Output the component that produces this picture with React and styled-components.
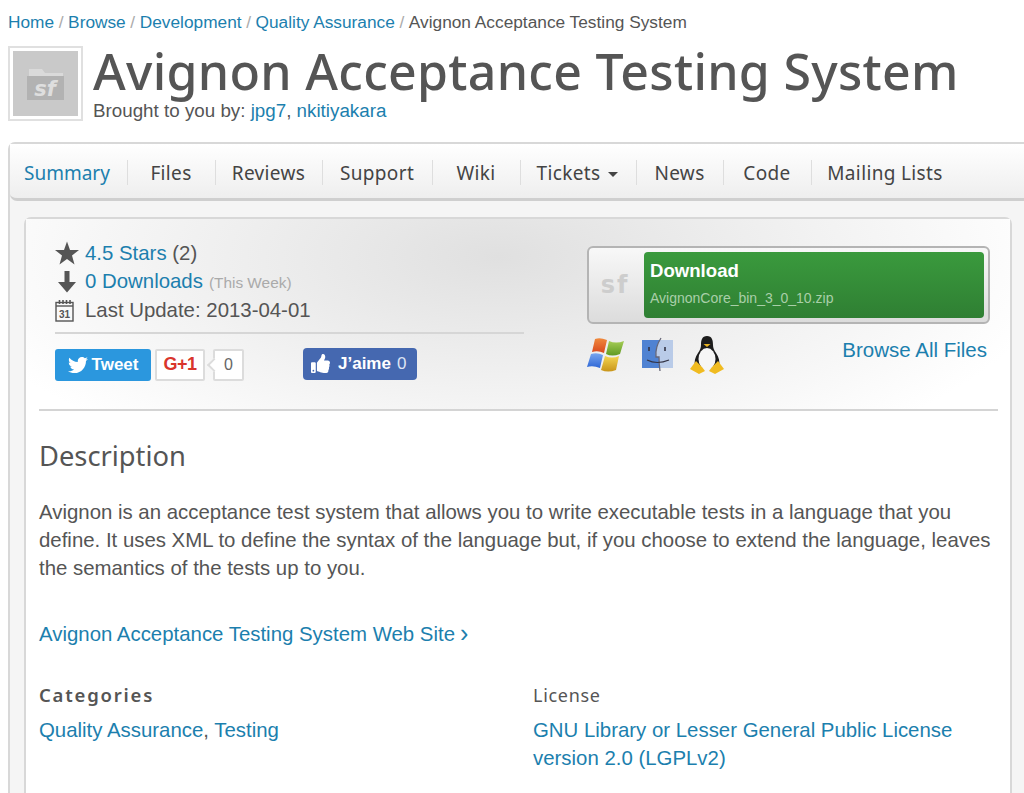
import React from 'react';
import styled, { createGlobalStyle } from 'styled-components';
import { FaTwitter, FaThumbsUp } from 'react-icons/fa';

const Global = createGlobalStyle`
  html, body { margin: 0; padding: 0; height: 793px; overflow: hidden; background: #fff; }
  body { font-family: "Liberation Sans", Arial, sans-serif; color: #555; }
  a { color: #1c7fae; text-decoration: none; }
`;

const heading = `"Noto Sans", "Open Sans", sans-serif`;

const Page = styled.div`
  padding-left: 8px;
  width: 1016px;
  height: 793px;
  overflow: hidden;
`;

const Crumbs = styled.div`
  height: 46px;
  box-sizing: border-box;
  padding-top: 13px;
  font-size: 17.3px;
  line-height: 19px;
  white-space: nowrap;
  color: #555;
  span { color: #aaa; margin: 0 4.6px; }
`;

const Head = styled.div`
  display: flex;
  height: 96px;
`;

const Logo = styled.div`
  width: 75px;
  height: 75px;
  box-sizing: border-box;
  border: 2px solid #e0e0e0;
  padding: 3px;
  margin-right: 10px;
  background: #fff;
  div {
    width: 100%;
    height: 100%;
    background: #c9c9c9;
    display: flex;
    align-items: center;
    justify-content: center;
  }
`;

const TitleBlock = styled.div`
  white-space: nowrap;
`;

const Title = styled.h1`
  margin: -1px 0 0;
  font-family: ${heading};
  font-weight: 500;
  font-size: 50px;
  line-height: 52px;
  letter-spacing: 0.3px;
  color: #555;
`;

const By = styled.div`
  margin-top: 3px;
  font-size: 18.8px;
  line-height: 22px;
  color: #555;
`;

const Frame = styled.div`
  box-sizing: border-box;
  height: 660px;
  width: 1040px;
  background: #f5f5f5;
  border-left: 2px solid #d8d8d8;
  border-top: 2px solid #d8d8d8;
  border-radius: 7px 0 0 0;
`;

const Nav = styled.nav`
  height: 57px;
  box-sizing: border-box;
  display: flex;
  align-items: center;
  padding-top: 3px;
  background: linear-gradient(#fff, #eeeeee);
  border-bottom: 3px solid #cfcfcf;
  border-radius: 0 0 0 7px;
`;

const Tab = styled.a`
  display: flex;
  align-items: center;
  justify-content: ${p => (p.$first ? 'flex-start' : 'center')};
  box-sizing: border-box;
  flex: none;
  width: ${p => p.$w}px;
  height: 25px;
  padding-left: ${p => (p.$first ? 14 : 0)}px;
  padding-right: ${p => (p.$first ? 0 : 1)}px;
  border-right: ${p => (p.$last ? 'none' : '1px solid #dedede')};
  font-family: ${heading};
  font-size: 19px;
  letter-spacing: ${p => (p.$first ? 0 : 0.35)}px;
  white-space: nowrap;
  color: ${p => (p.$first ? '#1c7fae' : '#444')};
`;

const Caret = styled.i`
  width: 0;
  height: 0;
  margin-left: 8px;
  margin-right: 1px;
  margin-top: 3px;
  border-left: 5.5px solid transparent;
  border-right: 5.5px solid transparent;
  border-top: 5px solid #444;
`;

const Panel = styled.div`
  box-sizing: border-box;
  width: 988px;
  margin: 16px 0 0 14px;
  height: 600px;
  background: #fff;
  border: 2px solid #d8d8d8;
  border-radius: 7px 7px 0 0;
`;

const Summary = styled.div`
  height: 190px;
  box-sizing: border-box;
  display: flex;
  padding-left: 29px;
  background: radial-gradient(ellipse 560px 230px at 48% 20%, #e0e0e0, #ffffff);
`;

const Rule = styled.div`
  height: 2px;
  background: #d4d4d4;
  margin: 0 12px 0 13px;
`;

const Stats = styled.div`
  width: 469px;
  padding-top: 20px;
`;

const Stat = styled.div`
  display: flex;
  align-items: center;
  height: 28.5px;
  font-size: 20.4px;
  color: #555;
  white-space: nowrap;
  svg { width: 24px; flex: none; margin-right: 6px; }
  small { font-size: 15.4px; color: #aaa; margin-left: 6px; margin-top: 2px; }
`;

const Social = styled.div`
  border-top: 2px solid #d6d6d6;
  margin-top: 7px;
  padding-top: 15px;
  display: flex;
  align-items: flex-start;
`;

const Tweet = styled.div`
  display: flex;
  align-items: center;
  justify-content: center;
  gap: 4px;
  width: 96px;
  height: 32px;
  background: #2b97de;
  border-radius: 3px;
  color: #fff;
  font-weight: 700;
  font-size: 17px;
`;

const Plus = styled.div`
  display: flex;
  align-items: center;
  justify-content: center;
  width: 50px;
  height: 32px;
  box-sizing: border-box;
  margin-left: 4px;
  background: #fff;
  border: 2px solid #dcdcdc;
  border-radius: 2px;
  color: #d9352c;
  font-weight: 700;
  font-size: 18px;
  letter-spacing: -0.5px;
`;

const Count = styled.div`
  position: relative;
  width: 31px;
  height: 32px;
  box-sizing: border-box;
  margin-left: 8px;
  background: #fff;
  border: 2px solid #dcdcdc;
  border-radius: 2px;
  display: flex;
  align-items: center;
  justify-content: center;
  font-size: 16px;
  color: #666;
  &::before {
    content: '';
    position: absolute;
    left: -6px;
    top: 9px;
    width: 8px;
    height: 8px;
    background: #fff;
    border-left: 2px solid #dcdcdc;
    border-bottom: 2px solid #dcdcdc;
    transform: rotate(45deg);
  }
`;

const Like = styled.div`
  display: flex;
  align-items: center;
  gap: 8px;
  box-sizing: border-box;
  padding-left: 8px;
  width: 114px;
  height: 32px;
  margin: -1px 0 0 59px;
  background: #4568b0;
  border-radius: 4px;
  color: #fff;
  font-weight: 700;
  font-size: 17px;
  span { font-weight: 400; margin-left: -2px; color: #dde4f3; }
`;

const Side = styled.div`
  width: 403px;
  margin-left: 63px;
  padding-top: 27px;
`;

const DownloadBox = styled.div`
  display: flex;
  box-sizing: border-box;
  height: 78px;
  padding: 4px 4px 4px 5px;
  background: linear-gradient(#f8f8f8, #dcdcdc);
  border: 2px solid #b4b4b4;
  border-radius: 6px;
`;

const SfMark = styled.div`
  width: 50px;
  box-sizing: border-box;
  padding-right: 8px;
  display: flex;
  align-items: center;
  justify-content: center;
  font-family: "DejaVu Sans", sans-serif;
  font-weight: 700;
  font-size: 24px;
  letter-spacing: 2px;
  color: #cdcdcd;
`;

const GreenButton = styled.div`
  flex: 1;
  border-radius: 4px;
  background: linear-gradient(#3a9a3d, #2f7f33);
  padding: 6px 6px;
  color: #fff;
  h4 { margin: 0; font-size: 18.6px; line-height: 26px; font-weight: 700; }
  p { margin: 5px 0 0; font-size: 14px; line-height: 18px; color: #a9cfa9; }
`;

const OsRow = styled.div`
  display: flex;
  align-items: center;
  gap: 16px;
  margin-top: 12px;
  svg { flex: none; display: block; }
  a { margin-left: auto; margin-right: 3px; margin-top: -11px; font-size: 20.5px; }
`;

const Body = styled.div`
  padding: 0 13px;
`;

const H2 = styled.h2`
  margin: 28px 0 25px;
  font-family: ${heading};
  font-weight: 400;
  font-size: 27.3px;
  line-height: 34px;
  color: #555;
`;

const P = styled.p`
  margin: 0;
  font-size: 20.4px;
  line-height: 28px;
  color: #555;
`;

const Site = styled.a`
  display: flex;
  align-items: center;
  margin-top: 38px;
  font-size: 20.4px;
  line-height: 28px;
  i { font-style: normal; font-size: 25px; line-height: 24px; margin: -3px 0 0 5px; }
`;

const Cols = styled.div`
  display: flex;
  margin-top: 33px;
`;

const Col = styled.div`
  flex: none;
  width: 494px;
  h3 {
    margin: 0 0 7px;
    font-family: ${heading};
    font-size: ${p => (p.$bold ? 18.5 : 18)}px;
    line-height: 28px;
    letter-spacing: ${p => (p.$bold ? 1.8 : 0.7)}px;
    font-weight: ${p => (p.$bold ? 600 : 400)};
    color: #555;
  }
  div { font-size: 20.4px; line-height: 28px; color: #555; }
`;

const StarIcon = () => (
  <svg viewBox="0 0 24 24" height="24">
    <polygon fill="#555" points="12,0.5 15,9 24,9 17,14.6 19.5,23.5 12,18 4.5,23.5 7,14.6 0,9 9,9" />
  </svg>
);

const DownIcon = () => (
  <svg viewBox="0 0 24 24" height="24">
    <path fill="#555" d="M9.5 1h5v11h6.5l-9 10.5-9-10.5h6.5z" />
  </svg>
);

const CalIcon = () => (
  <svg viewBox="2.5 0 19 23" height="23" preserveAspectRatio="xMinYMid">
    <rect x="3.5" y="3.5" width="17" height="18.5" fill="none" stroke="#555" strokeWidth="1.4" />
    <path d="M3.5 7h17" stroke="#555" strokeWidth="1.4" />
    <path d="M7 1v4M10.5 1v4M14 1v4M17.5 1v4" stroke="#555" strokeWidth="1.6" />
    <text x="12" y="19" textAnchor="middle" fontSize="10" fontWeight="700" fontFamily="Liberation Sans" fill="#555">31</text>
  </svg>
);

const FolderIcon = () => (
  <svg width="38" height="34" viewBox="0 0 38 34">
    <path fill="#dadada" d="M2 2h13l3 4h18v5H2z" />
    <rect x="0" y="9" width="37" height="24" fill="#b2b2b2" />
    <text x="18" y="29" textAnchor="middle" fontSize="21" fontWeight="700" fontStyle="italic" fontFamily="DejaVu Sans" fill="#dedede">sf</text>
  </svg>
);

const WinIcon = () => (
  <svg width="38" height="36" viewBox="0 0 38 36">
    <defs>
      <linearGradient id="wr" x1="0" y1="0" x2="0" y2="1"><stop offset="0" stopColor="#f08a3c" /><stop offset="1" stopColor="#d9481f" /></linearGradient>
      <linearGradient id="wg" x1="0" y1="0" x2="0" y2="1"><stop offset="0" stopColor="#a5cc55" /><stop offset="1" stopColor="#5f9a22" /></linearGradient>
      <linearGradient id="wb" x1="0" y1="0" x2="0" y2="1"><stop offset="0" stopColor="#79a6ee" /><stop offset="1" stopColor="#2d66d6" /></linearGradient>
      <linearGradient id="wy" x1="0" y1="0" x2="0" y2="1"><stop offset="0" stopColor="#f3d550" /><stop offset="1" stopColor="#c9951a" /></linearGradient>
    </defs>
    <path fill="url(#wr)" d="M8 2q5-2 12 1l-3 13q-6-3-12-1z" />
    <path fill="url(#wg)" d="M22 4q7 3 15 0l-4 13q-8 3-14 0z" />
    <path fill="url(#wb)" d="M4 17q6-2 12 1l-3 13q-7-3-13-1z" />
    <path fill="url(#wy)" d="M18 19q7 3 14 0l-3 14q-8 3-15 0z" />
  </svg>
);

const FinderIcon = () => (
  <svg width="33" height="36" viewBox="0 0 33 36">
    <rect x="1" y="3" width="31" height="28" fill="#b9cbe8" />
    <path fill="#4f82d2" d="M1 3h18q-5 8-4 17h3v11H1z" />
    <path d="M20 1q-6 9-5 19h3q0 7 1 14" fill="none" stroke="#667" strokeWidth="1.3" />
    <path d="M8 10v4M24 10v4" stroke="#334" strokeWidth="1.6" />
    <path d="M6 23q10 5 22 0" fill="none" stroke="#334" strokeWidth="1.2" />
  </svg>
);

const TuxIcon = () => (
  <svg width="34" height="38" viewBox="0 0 34 38">
    <path fill="#1c1c1c" d="M17 0c-5 0-6 4-6 9 0 3-1 5-3 8-3 4-4 9-3 13h24c1-4 0-9-3-13-2-3-3-5-3-8 0-5-1-9-6-9z" />
    <ellipse cx="17" cy="23" rx="8.5" ry="11" fill="#f6f6f6" />
    <path fill="#e9b320" d="M13.5 8h7l-3.5 3z" />
    <path fill="#f0bb20" d="M0 33l6-8 6 6 3 4-6 3zM34 33l-6-8-6 6-3 4 6 3z" />
  </svg>
);

export default function App() {
  return (
    <Page>
      <Global />
      <Crumbs>
        <a href="#">Home</a><span>/</span><a href="#">Browse</a><span>/</span><a href="#">Development</a><span>/</span><a href="#">Quality Assurance</a><span>/</span>Avignon Acceptance Testing System
      </Crumbs>
      <Head>
        <Logo><div><FolderIcon /></div></Logo>
        <TitleBlock>
          <Title>Avignon Acceptance Testing System</Title>
          <By>Brought to you by: <a href="#">jpg7</a>, <a href="#">nkitiyakara</a></By>
        </TitleBlock>
      </Head>
      <Frame>
        <Nav>
          <Tab $first $w={118}>Summary</Tab>
          <Tab $w={88}>Files</Tab>
          <Tab $w={107}>Reviews</Tab>
          <Tab $w={110}>Support</Tab>
          <Tab $w={88}>Wiki</Tab>
          <Tab $w={116}>Tickets<Caret /></Tab>
          <Tab $w={87}>News</Tab>
          <Tab $w={88}>Code</Tab>
          <Tab $last $w={147}>Mailing Lists</Tab>
        </Nav>
        <Panel>
          <Summary>
            <Stats>
              <Stat><StarIcon /><a href="#">4.5 Stars</a>&nbsp;(2)</Stat>
              <Stat><DownIcon /><a href="#">0 Downloads</a><small>(This Week)</small></Stat>
              <Stat><CalIcon />Last Update: 2013-04-01</Stat>
              <Social>
                <Tweet><FaTwitter size={20} />Tweet</Tweet>
                <Plus>G+1</Plus>
                <Count>0</Count>
                <Like><FaThumbsUp size={19} />J’aime <span>0</span></Like>
              </Social>
            </Stats>
            <Side>
              <DownloadBox>
                <SfMark>sf</SfMark>
                <GreenButton>
                  <h4>Download</h4>
                  <p>AvignonCore_bin_3_0_10.zip</p>
                </GreenButton>
              </DownloadBox>
              <OsRow>
                <WinIcon />
                <FinderIcon />
                <TuxIcon />
                <a href="#">Browse All Files</a>
              </OsRow>
            </Side>
          </Summary>
          <Rule />
          <Body>
            <H2>Description</H2>
            <P>Avignon is an acceptance test system that allows you to write executable tests in a language that you define. It uses XML to define the syntax of the language but, if you choose to extend the language, leaves the semantics of the tests up to you.</P>
            <Site href="#">Avignon Acceptance Testing System Web Site<i>›</i></Site>
            <Cols>
              <Col $bold>
                <h3>Categories</h3>
                <div><a href="#">Quality Assurance</a>, <a href="#">Testing</a></div>
              </Col>
              <Col>
                <h3>License</h3>
                <div><a href="#">GNU Library or Lesser General Public License<br />version 2.0 (LGPLv2)</a></div>
              </Col>
            </Cols>
          </Body>
        </Panel>
      </Frame>
    </Page>
  );
}
